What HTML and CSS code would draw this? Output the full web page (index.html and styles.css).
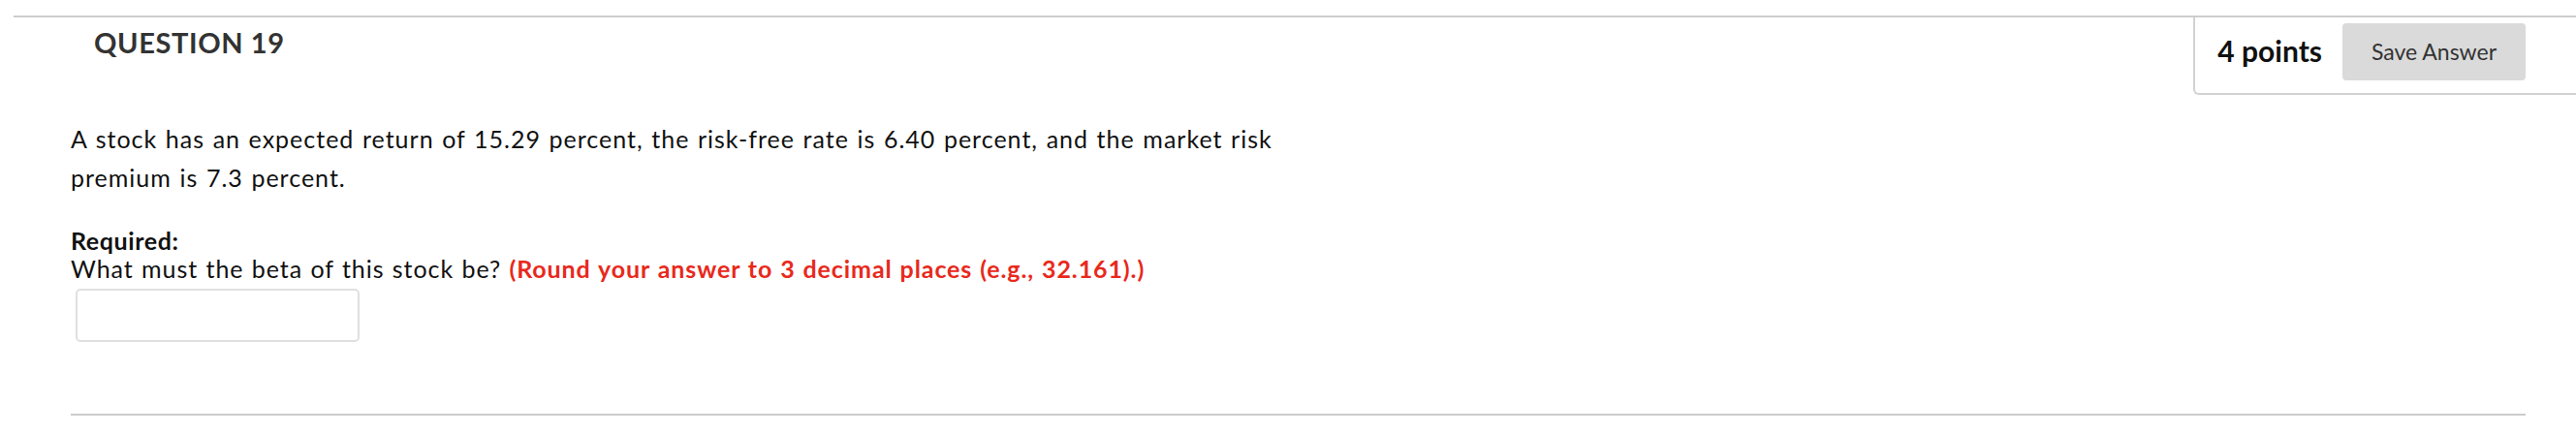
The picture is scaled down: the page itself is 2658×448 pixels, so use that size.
FILE: index.html
```html
<!DOCTYPE html>
<html lang="en">
<head>
<meta charset="utf-8">
<title>Question 19</title>
<link rel="stylesheet" href="styles.css">
</head>
<body>
<div class="question">
  <div class="q-header">
    <h3 class="q-title">QUESTION 19</h3>
    <div class="points-box">
      <span class="points">4 points</span>
      <button class="save" type="button">Save Answer</button>
    </div>
  </div>
  <div class="q-body">
    <p class="stem">A stock has an expected return of 15.29 percent, the risk-free rate is 6.40 percent, and the market risk premium is 7.3 percent.</p>
    <div class="required">
      <div class="req-label">Required:</div>
      <div class="req-text">What must the beta of this stock be? <span class="hint">(Round your answer to 3 decimal places (e.g., 32.161).)</span></div>
    </div>
    <input class="answer" type="text" aria-label="Answer">
  </div>
</div>
</body>
</html>
```

FILE: styles.css
```css
html, body {
  margin: 0;
  padding: 0;
  background: #ffffff;
}

body {
  font-family: Lato, "Liberation Sans", sans-serif;
  color: #111111;
}

.question {
  margin-top: 16px;
  margin-left: 14px;
  border-top: 2px solid #cccccc;
}

.q-header {
  display: flex;
  justify-content: space-between;
  align-items: flex-start;
}

.q-title {
  margin: 9px 0 0 83px;
  font-size: 29px;
  line-height: 1.2;
  font-weight: 700;
  letter-spacing: 0.6px;
  color: #333333;
}

.points-box {
  display: flex;
  align-items: center;
  gap: 21px;
  padding: 6px 52px 13px 23px;
  border-left: 2px solid #d2d2d2;
  border-bottom: 2px solid #d2d2d2;
  border-bottom-left-radius: 6px;
}

.points {
  font-size: 30px;
  line-height: 36px;
  font-weight: 700;
  color: #111111;
  margin-bottom: 4px;
}

.save {
  width: 189px;
  height: 59px;
  padding: 0 0 2px 0;
  border: none;
  border-radius: 4px;
  background: #dadada;
  font-family: Lato, "Liberation Sans", sans-serif;
  font-size: 23px;
  color: #333333;
}

.q-body {
  margin: 25px 52px 0 59px;
  padding-bottom: 74px;
  border-bottom: 2px solid #cccccc;
}

.stem {
  margin: 0;
  max-width: 1300px;
  font-size: 25px;
  line-height: 40px;
  letter-spacing: 1px;
  word-spacing: 1.2px;
}

.required {
  margin-top: 31px;
  font-size: 25px;
  line-height: 29px;
  letter-spacing: 0.95px;
  word-spacing: 1px;
}

.req-label {
  font-weight: 700;
  letter-spacing: 0.6px;
}

.hint {
  font-weight: 700;
  color: #e8291c;
  letter-spacing: 0.9px;
}

.answer {
  display: block;
  box-sizing: border-box;
  margin: 6px 0 0 5px;
  width: 293px;
  height: 55px;
  border: 2px solid #e0e0e0;
  border-radius: 5px;
  background: #ffffff;
}
```
